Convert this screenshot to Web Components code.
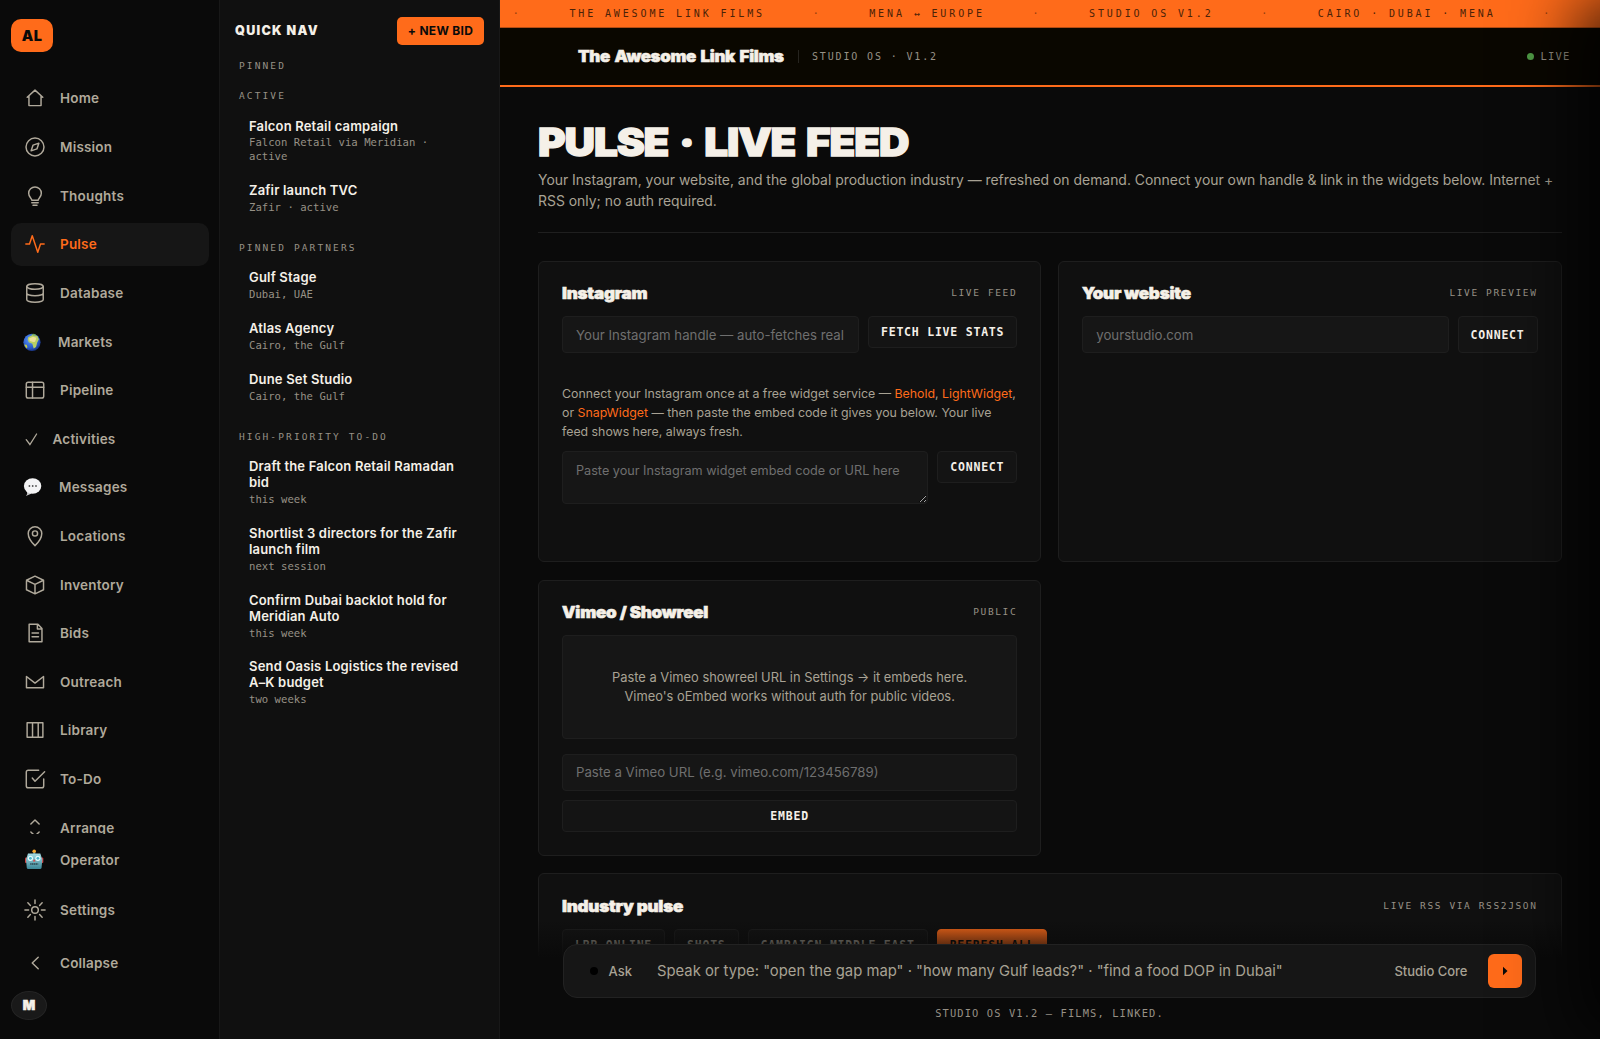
<!DOCTYPE html>
<html lang="en">
<head>
<meta charset="UTF-8">
<title>The Awesome Link Films - Studio OS</title>
<style>
    :root {
        --orange: #ff6b1a;
        --bg: #0a0a0a;
        --panel: #101010;
        --field: #161616;
        --line: #1e1e1e;
        --cream: #f5f0e8;
        --muted: #a8a294;
        --dim: #979186;
        --sans: Inter, "Liberation Sans", sans-serif;
        --mono: "DejaVu Sans Mono", "Liberation Mono", monospace;
    }
    html, body {
        margin: 0;
        height: 100%;
        overflow: hidden;
        background: var(--bg);
        color: var(--cream);
        font-family: var(--sans);
    }
</style>
</head>
<body>
<studio-app></studio-app>

<script>
const ICONS = {
    home: '<path d="M3.5 11.2L12 3.4l8.5 7.8M5.4 9.7v10.6h13.2V9.7"/>',
    mission: '<circle cx="12" cy="12" r="9.8"/><path d="M16.2 7.8l-2.1 6.3-6.3 2.1 2.1-6.3z"/>',
    thoughts: '<path d="M8.5 16.6c0-2.2-3.4-3.2-3.4-7.6a6.9 6.9 0 0 1 13.8 0c0 4.4-3.4 5.4-3.4 7.6zM8.5 19.3h7M9.8 22.2h4.4"/>',
    pulse: '<path d="M22 12h-4l-3 9L9 3l-3 9H2"/>',
    database: '<ellipse cx="12" cy="5" rx="9" ry="3"/><path d="M21 12c0 1.7-4 3-9 3s-9-1.3-9-3M3 5v14c0 1.7 4 3 9 3s9-1.3 9-3V5"/>',
    pipeline: '<rect x="2.5" y="3.5" width="19" height="17.2" rx="2"/><path d="M2.5 8.9h19M9.3 3.5v17.2"/>',
    locations: '<path d="M12 22.5s7.4-7 7.4-13.2a7.4 7.4 0 0 0-14.8 0C4.6 15.5 12 22.5 12 22.5z"/><circle cx="12" cy="9.2" r="2.8"/>',
    inventory: '<path d="M12 2.4l9.3 4.4v10.4L12 21.6l-9.3-4.4V6.8zM2.7 6.8L12 11.4l9.3-4.6M12 11.4v10.2"/>',
    bids: '<path d="M5.6 2.5h9.6l4.4 4.6v14.4h-14zM14.6 2.5v5.2h5M8.8 11.9h7M8.8 16h7"/>',
    outreach: '<path d="M2.7 6v12.3h18.6V6L12 13.2z"/>',
    library: '<path d="M3.4 4.2h17.2v15.6H3.4zM9.3 4.2v15.6M15.5 4.2v15.6"/>',
    todo: '<path d="M9 11l3 3.5L22.5 4M21.5 12v7.5a2 2 0 0 1-2 2h-15a2 2 0 0 1-2-2v-15a2 2 0 0 1 2-2H16"/>',
    arrange: '<path d="M7.5 7.7L12 3.3l4.5 4.4M7.5 16.3l4.5 4.4 4.5-4.4"/>',
    settings: '<circle cx="12" cy="12" r="3.6"/><path d="M12 1v4M12 19v4M1 12h4M19 12h4M4.2 4.2L7 7M17 17l2.8 2.8M4.2 19.8L7 17M17 7l2.8-2.8"/>',
    collapse: '<path d="M15.5 5.8L9 12l6.5 6.2"/>'
};

// Icons that carry their own colours and box width
const PICTOS = {
    markets: `<svg width="20" height="22" viewBox="0 0 20 22">
        <defs><radialGradient id="sea" cx=".4" cy=".35" r=".7"><stop offset="0" stop-color="#5b9bff"/><stop offset=".7" stop-color="#2957c4"/><stop offset="1" stop-color="#152c74"/></radialGradient></defs>
        <circle cx="8" cy="11.3" r="8.6" fill="url(#sea)"/>
        <path d="M4.3 6.2L8.5 4l4.8.8 1.6 3.5-1.7 3.2-1.2 4.6-2.3 1.3-1.4-4.7-3.6-1.4-1-3z" fill="#b9cf63"/>
        <path d="M5 7.5l4-1.7 3.4 1-1.3 4-1.8.2-3.5-1z" fill="#ecdf9b"/>
        <path d="M.4 13.5l2.2.2.9 2.6-1.1.9A8.6 8.6 0 0 1 .4 13.5z" fill="#c9d03f"/>
        <path d="M7.5 3.3l2.3-.5 2.5.9-3 .8z" fill="#6fa758"/></svg>`,
    activities: `<svg width="14.5" height="22" viewBox="0 0 14.5 22" fill="none" stroke="currentColor" stroke-width="1.3" stroke-linecap="round">
        <path d="M2.2 11.7l3.7 4.8L12.6 6"/></svg>`,
    messages: `<svg width="21" height="22" viewBox="0 0 21 22">
        <path d="M2.8 15l.4 3-1.3 1.9 5.8-2.5z" fill="#c9c9cb"/>
        <ellipse cx="8.6" cy="10" rx="8.7" ry="7.7" fill="#f4f4f5"/>
        <g fill="#555"><circle cx="5.4" cy="10" r=".9"/><circle cx="8.7" cy="10" r=".9"/><circle cx="12" cy="10" r=".9"/></g></svg>`,
    operator: `<svg width="22" height="22" viewBox="0 0 22 22">
        <defs><linearGradient id="tin" x2="0" y2="1"><stop offset="0" stop-color="#a5dbe4"/><stop offset="1" stop-color="#3c8798"/></linearGradient></defs>
        <rect x="9.3" y="2" width="2" height="4" fill="#4a90a0"/><circle cx="10.2" cy="2.3" r="1.8" fill="#f3a32b"/>
        <rect x="1" y="8.5" width="2.5" height="5.5" rx="1" fill="#cf4444"/><rect x="16.8" y="8.5" width="2.5" height="5.5" rx="1" fill="#cf4444"/>
        <path d="M4 4.6h12.3l2 6-.8 8.3a1.5 1.5 0 0 1-1.4 1.1H4.2a1.5 1.5 0 0 1-1.4-1.1L2 10.6z" fill="url(#tin)"/>
        <circle cx="6.4" cy="9.3" r="2.6" fill="#e3fbff"/><circle cx="13.9" cy="9.3" r="2.6" fill="#e3fbff"/>
        <circle cx="6.4" cy="9.3" r="1.4" fill="#49b5cd"/><circle cx="13.9" cy="9.3" r="1.4" fill="#49b5cd"/>
        <path d="M10.2 10l1.4 2.5H8.8z" fill="#d44"/><path d="M6.2 15h8" stroke="#2a4750" stroke-width="1.4" stroke-dasharray="1.4 .4"/></svg>`
};

function define(name, html) {
    const template = document.createElement('template');
    template.innerHTML = html;
    customElements.define(name, class extends HTMLElement {
        constructor() {
            super();
            this.attachShadow({ mode: 'open' });
            this.shadowRoot.appendChild(template.content.cloneNode(true));
        }
    });
}

class NavItem extends HTMLElement {
    constructor() {
        super();
        this.attachShadow({ mode: 'open' });
    }

    connectedCallback() {
        const name = this.getAttribute('icon');
        const icon = PICTOS[name] || `<svg width="22" height="22" viewBox="0 0 24 24" fill="none" stroke="currentColor"
            stroke-width="1.6" stroke-linejoin="round" stroke-linecap="round">${ICONS[name]}</svg>`;
        this.shadowRoot.innerHTML = `
            <style>
                :host {
                    display: flex;
                    align-items: center;
                    gap: 14px;
                    box-sizing: border-box;
                    height: 42.62px;
                    flex: none;
                    padding: 0 13px;
                    border-radius: 10px;
                    color: #b0a99b;
                    font-size: 13.5px;
                    font-weight: 600;
                    letter-spacing: .2px;
                }
                :host([active]) { background: #161616; color: var(--orange); }
                svg { flex: none; overflow: visible; }
            </style>
            ${icon}<span><slot></slot></span>
        `;
    }
}
customElements.define('nav-item', NavItem);

define('side-bar', `
    <style>
        :host {
            display: flex;
            flex-direction: column;
            box-sizing: border-box;
            width: 220px;
            height: 100%;
            padding: 19px 10.5px 19px 11px;
            border-right: 1px solid #181818;
        }
        .logo {
            display: grid;
            place-items: center;
            width: 42px;
            height: 33px;
            border-radius: 10px;
            background: var(--orange);
            color: #0a0a0a;
            font-size: 14.5px;
            font-weight: 900;
            letter-spacing: .3px;
        }
        .list {
            display: flex;
            flex-direction: column;
            gap: 6px;
            height: 756.7px;
            margin-top: 25.2px;
            overflow: hidden;
        }
        .foot { display: flex; flex-direction: column; padding-top: 5.3px; }
        .foot nav-item + nav-item { margin-top: 7px; }
        .foot nav-item.last { margin-top: 10.3px; }
        .avatar {
            display: grid;
            place-items: center;
            box-sizing: border-box;
            width: 36px;
            height: 29px;
            margin-top: 6.5px;
            border: 1px solid #242424;
            border-radius: 50%;
            background: #191919;
            font-size: 13px;
            font-weight: 900;
            -webkit-text-stroke: .6px;
        }
    </style>
    <div class="logo">AL</div>
    <div class="list">
        <nav-item icon="home">Home</nav-item>
        <nav-item icon="mission">Mission</nav-item>
        <nav-item icon="thoughts">Thoughts</nav-item>
        <nav-item icon="pulse" active>Pulse</nav-item>
        <nav-item icon="database">Database</nav-item>
        <nav-item icon="markets">Markets</nav-item>
        <nav-item icon="pipeline">Pipeline</nav-item>
        <nav-item icon="activities">Activities</nav-item>
        <nav-item icon="messages">Messages</nav-item>
        <nav-item icon="locations">Locations</nav-item>
        <nav-item icon="inventory">Inventory</nav-item>
        <nav-item icon="bids">Bids</nav-item>
        <nav-item icon="outreach">Outreach</nav-item>
        <nav-item icon="library">Library</nav-item>
        <nav-item icon="todo">To-Do</nav-item>
        <nav-item icon="arrange">Arrange</nav-item>
    </div>
    <div class="foot">
        <nav-item icon="operator">Operator</nav-item>
        <nav-item icon="settings">Settings</nav-item>
        <nav-item icon="collapse" class="last">Collapse</nav-item>
        <div class="avatar">M</div>
    </div>
`);

define('quick-section', `
    <style>
        :host { display: block; margin-bottom: 16.5px; }
        .label {
            padding-left: 4px;
            color: var(--dim);
            font: 9.5px/14px var(--mono);
            letter-spacing: 2.12px;
        }
        ::slotted(quick-item:first-of-type) { margin-top: 6.5px; }
        ::slotted(quick-item:last-of-type) { margin-bottom: 18px; }
    </style>
    <div class="label"><slot name="label"></slot></div>
    <slot></slot>
`);

define('quick-item', `
    <style>
        :host {
            display: block;
            margin-bottom: 2px;
            padding: 9px 18px 8.1px 14px;
            font-size: 13px;
            font-weight: 600;
            line-height: 15.9px;
            letter-spacing: .18px;
        }
        .sub {
            margin-top: 2px;
            color: var(--dim);
            font: 10.6px/13.8px var(--mono);
            letter-spacing: .02px;
        }
    </style>
    <slot></slot>
    <div class="sub"><slot name="sub"></slot></div>
`);

define('quick-nav', `
    <style>
        :host {
            display: block;
            box-sizing: border-box;
            width: 280px;
            height: 100%;
            padding: 17px 15px 0;
            border-right: 1px solid #181818;
            background: var(--panel);
        }
        header {
            display: flex;
            align-items: center;
            justify-content: space-between;
            height: 27.5px;
            margin-bottom: 14px;
        }
        h2 { margin: 0; font-size: 12.5px; font-weight: 900; letter-spacing: 1.3px; }
        button {
            width: 87px;
            height: 27.5px;
            padding: 0;
            border: 0;
            border-radius: 5px;
            background: var(--orange);
            color: #0a0a0a;
            font: 700 12px var(--sans);
            letter-spacing: .3px;
            white-space: nowrap;
        }
    </style>
    <header><h2>QUICK NAV</h2><button>+ NEW BID</button></header>
    <quick-section><span slot="label">PINNED</span></quick-section>
    <quick-section><span slot="label">ACTIVE</span>
        <quick-item>Falcon Retail campaign<span slot="sub">Falcon Retail via Meridian · active</span></quick-item>
        <quick-item>Zafir launch TVC<span slot="sub">Zafir · active</span></quick-item>
    </quick-section>
    <quick-section><span slot="label">PINNED PARTNERS</span>
        <quick-item>Gulf Stage<span slot="sub">Dubai, UAE</span></quick-item>
        <quick-item>Atlas Agency<span slot="sub">Cairo, the Gulf</span></quick-item>
        <quick-item>Dune Set Studio<span slot="sub">Cairo, the Gulf</span></quick-item>
    </quick-section>
    <quick-section><span slot="label">HIGH-PRIORITY TO-DO</span>
        <quick-item>Draft the Falcon Retail Ramadan bid<span slot="sub">this week</span></quick-item>
        <quick-item>Shortlist 3 directors for the Zafir launch film<span slot="sub">next session</span></quick-item>
        <quick-item>Confirm Dubai backlot hold for Meridian Auto<span slot="sub">this week</span></quick-item>
        <quick-item>Send Oasis Logistics the revised A–K budget<span slot="sub">two weeks</span></quick-item>
    </quick-section>
`);

define('ticker-bar', `
    <style>
        :host {
            display: flex;
            align-items: center;
            gap: 47.7px;
            box-sizing: border-box;
            height: 28px;
            padding: 1.5px 0 0 12.8px;
            overflow: hidden;
            border-bottom: 1px solid #b34c14;
            background: var(--orange);
            color: #4a2208;
            font: 10px/1 var(--mono);
            letter-spacing: 2.87px;
            white-space: nowrap;
        }
        i { font-style: normal; opacity: .6; }
    </style>
    <i>·</i><span>THE AWESOME LINK FILMS</span>
    <i>·</i><span>MENA ↔ EUROPE</span>
    <i>·</i><span>STUDIO OS V1.2</span>
    <i>·</i><span>CAIRO · DUBAI · MENA</span>
    <i>·</i>
`);

define('top-bar', `
    <style>
        :host {
            display: flex;
            align-items: center;
            box-sizing: border-box;
            height: 59px;
            padding: 0 29.5px 0 78px;
            border-bottom: 2px solid var(--orange);
            background: #0a0700;
        }
        b {
            width: 206px;
            padding-bottom: 2px;
            font-size: 16px;
            font-weight: 900;
            letter-spacing: -.3px;
            word-spacing: 1.5px;
            white-space: nowrap;
            -webkit-text-stroke: .6px;
            transform: scaleX(1.054);
            transform-origin: 0 0;
        }
        .version {
            margin-left: 14px;
            padding-left: 13px;
            border-left: 1px solid #26241f;
            color: var(--dim);
            font: 10px/13px var(--mono);
            letter-spacing: 1.85px;
        }
        .live {
            display: flex;
            align-items: center;
            gap: 6px;
            margin-left: auto;
            color: var(--dim);
            font: 10.5px/13px var(--mono);
            letter-spacing: 1.2px;
        }
        .live::before {
            content: "";
            width: 7px;
            height: 7px;
            border-radius: 50%;
            background: #4f9a45;
        }
    </style>
    <b>The Awesome Link Films</b>
    <span class="version">STUDIO OS · V1.2</span>
    <span class="live">LIVE</span>
`);

define('feed-card', `
    <style>
        :host {
            display: block;
            box-sizing: border-box;
            padding: 23px;
            border: 1px solid var(--line);
            border-radius: 6px;
            background: var(--panel);
        }
        header {
            display: flex;
            align-items: center;
            justify-content: space-between;
            height: 17px;
            margin-bottom: 14.5px;
        }
        h3 {
            margin: 0;
            font-size: 16px;
            font-weight: 900;
            letter-spacing: -.2px;
            -webkit-text-stroke: .6px;
            transform: scaleX(1.063);
            transform-origin: 0 0;
        }
        .meta { color: var(--dim); font: 9.5px/12px var(--mono); letter-spacing: 1.62px; }
    </style>
    <header><h3><slot name="title"></slot></h3><span class="meta"><slot name="meta"></slot></span></header>
    <slot></slot>
`);

define('mono-button', `
    <style>
        :host {
            display: flex;
            align-items: center;
            justify-content: center;
            box-sizing: border-box;
            min-height: 32px;
            flex: none;
            padding: 2px 12px 0;
            border: 1px solid var(--line);
            border-radius: 4px;
            background: #141414;
            font: 700 11.5px/1 var(--mono);
            letter-spacing: .78px;
            white-space: nowrap;
        }
        :host([quiet]) { color: #aaa498; }
        :host([primary]) { color: #0a0a0a; background: var(--orange); border-color: var(--orange); }
    </style>
    <slot></slot>
`);

class TextField extends HTMLElement {
    constructor() {
        super();
        this.attachShadow({ mode: 'open' });
    }

    connectedCallback() {
        const hint = this.getAttribute('hint');
        const field = this.hasAttribute('multiline')
            ? `<textarea placeholder="${hint}"></textarea>`
            : `<input placeholder="${hint}">`;
        this.shadowRoot.innerHTML = `
            <style>
                :host { display: block; flex: 1; min-width: 0; }
                input, textarea {
                    display: block;
                    box-sizing: border-box;
                    width: 100%;
                    height: 37px;
                    margin: 0;
                    padding: 0 13px;
                    border: 1px solid var(--line);
                    border-radius: 4px;
                    background: var(--field);
                    color: var(--cream);
                    font: 13.22px/17px var(--sans);
                    outline: 0;
                }
                textarea { height: 53px; padding: 10px 13px; font-size: 12.66px; }
                ::placeholder { color: #6f6f6f; }
            </style>
            ${field}
        `;
    }
}
customElements.define('text-field', TextField);

define('pulse-page', `
    <style>
        :host { display: block; padding: 35px 38.5px 0 38px; }
        h1 {
            margin: 0;
            font-size: 38px;
            font-weight: 900;
            line-height: 40px;
            letter-spacing: -1px;
            word-spacing: 3px;
            white-space: nowrap;
            -webkit-text-stroke: 1.3px;
            transform: scaleX(1.11);
            transform-origin: 0 0;
        }
        .lead {
            margin: 7.7px 0 0;
            padding-bottom: 19.3px;
            border-bottom: 1px solid #1f1f1f;
            color: var(--muted);
            font-size: 13.93px;
            line-height: 21.3px;
        }
        .grid {
            display: grid;
            grid-template-columns: 1fr 1fr;
            gap: 17.5px 17px;
            margin-top: 28px;
        }
        .row { display: flex; align-items: flex-start; gap: 9px; }
        .row.even { align-items: stretch; }
        .note {
            margin: 31px 0 9.5px;
            color: var(--muted);
            font-size: 12.34px;
            line-height: 19px;
            white-space: nowrap;
        }
        .note em { color: var(--orange); font-style: normal; }
        .first { height: 301.5px; }
        .empty {
            display: grid;
            place-items: center;
            box-sizing: border-box;
            height: 104px;
            margin-bottom: 14.5px;
            border: 1px solid var(--line);
            border-radius: 4px;
            background: var(--field);
            color: var(--muted);
            font-size: 12.87px;
            line-height: 19px;
            text-align: center;
        }
        .embed { margin-top: 9px; }
        .wide { grid-column: 1 / -1; height: 260px; }
    </style>
    <h1>PULSE · LIVE FEED</h1>
    <p class="lead">Your Instagram, your website, and the global production industry — refreshed on demand. Connect your own handle &amp; link in the widgets below. Internet +<br>RSS only; no auth required.</p>
    <div class="grid">
        <feed-card class="first">
            <span slot="title">Instagram</span><span slot="meta">LIVE FEED</span>
            <div class="row"><text-field hint="Your Instagram handle — auto-fetches real"></text-field><mono-button>FETCH LIVE STATS</mono-button></div>
            <p class="note">Connect your Instagram once at a free widget service — <em>Behold</em>, <em>LightWidget</em>,<br>or <em>SnapWidget</em> — then paste the embed code it gives you below. Your live<br>feed shows here, always fresh.</p>
            <div class="row"><text-field multiline hint="Paste your Instagram widget embed code or URL here"></text-field><mono-button>CONNECT</mono-button></div>
        </feed-card>
        <feed-card class="first">
            <span slot="title">Your website</span><span slot="meta">LIVE PREVIEW</span>
            <div class="row even"><text-field hint="yourstudio.com"></text-field><mono-button>CONNECT</mono-button></div>
        </feed-card>
        <feed-card>
            <span slot="title">Vimeo / Showreel</span><span slot="meta">PUBLIC</span>
            <div class="empty"><div>Paste a Vimeo showreel URL in Settings → it embeds here.<br>Vimeo's oEmbed works without auth for public videos.</div></div>
            <text-field hint="Paste a Vimeo URL (e.g. vimeo.com/123456789)"></text-field>
            <mono-button class="embed">EMBED</mono-button>
        </feed-card>
        <feed-card class="wide">
            <span slot="title">Industry pulse</span><span slot="meta">LIVE RSS VIA RSS2JSON</span>
            <div class="row">
                <mono-button quiet>LBB ONLINE</mono-button>
                <mono-button quiet>SHOTS</mono-button>
                <mono-button quiet>CAMPAIGN MIDDLE EAST</mono-button>
                <mono-button primary>REFRESH ALL</mono-button>
            </div>
        </feed-card>
    </div>
`);

define('command-bar', `
    <style>
        :host {
            display: flex;
            flex-direction: column;
            box-sizing: border-box;
            height: 119px;
            padding: 23.5px 64px 0 63px;
            background: linear-gradient(rgba(10, 10, 10, 0), #0a0a0a 38px);
        }
        .bar {
            display: flex;
            align-items: center;
            box-sizing: border-box;
            height: 54px;
            padding: 0 13px 0 26px;
            border: 1px solid #222;
            border-radius: 14px;
            background: var(--field);
            color: var(--muted);
            font-size: 13px;
            font-weight: 500;
        }
        .dot { width: 8px; height: 8px; border-radius: 50%; background: #000; }
        .ask { margin-left: 10.5px; width: 48.5px; }
        .hint { flex: 1; font-size: 14.82px; font-weight: 400; white-space: nowrap; }
        button {
            display: grid;
            place-items: center;
            width: 34px;
            height: 34px;
            margin-left: 20.5px;
            padding: 0;
            border: 0;
            border-radius: 6px;
            background: var(--orange);
        }
        .foot {
            margin-top: 9px;
            color: var(--dim);
            font: 10.4px/13px var(--mono);
            letter-spacing: 1.12px;
            text-align: center;
        }
    </style>
    <div class="bar">
        <span class="dot"></span><span class="ask">Ask</span>
        <span class="hint">Speak or type: "open the gap map" · "how many Gulf leads?" · "find a food DOP in Dubai"</span>
        <span>Studio Core</span>
        <button aria-label="Send"><svg width="6" height="10" viewBox="0 0 6 10"><path d="M1 .8L5.5 5 1 9.2z" fill="#0a0a0a"/></svg></button>
    </div>
    <div class="foot">STUDIO OS V1.2 — FILMS, LINKED.</div>
`);

define('studio-app', `
    <style>
        :host {
            display: grid;
            grid-template-columns: 220px 280px 1fr;
            height: 100vh;
            position: relative;
            overflow: hidden;
        }
        main { position: relative; min-width: 0; height: 100vh; overflow: hidden; }
        command-bar { position: absolute; left: 0; right: 0; bottom: 0; }
        /* closed drawer: only its shadow reaches into the page */
        .drawer {
            position: absolute;
            left: 100%;
            top: 0;
            width: 400px;
            height: 100%;
            box-shadow: -22px 0 64px rgba(0, 0, 0, .8);
        }
    </style>
    <side-bar></side-bar>
    <quick-nav></quick-nav>
    <main>
        <ticker-bar></ticker-bar>
        <top-bar></top-bar>
        <pulse-page></pulse-page>
        <command-bar></command-bar>
    </main>
    <div class="drawer"></div>
`);
</script>
</body>
</html>
